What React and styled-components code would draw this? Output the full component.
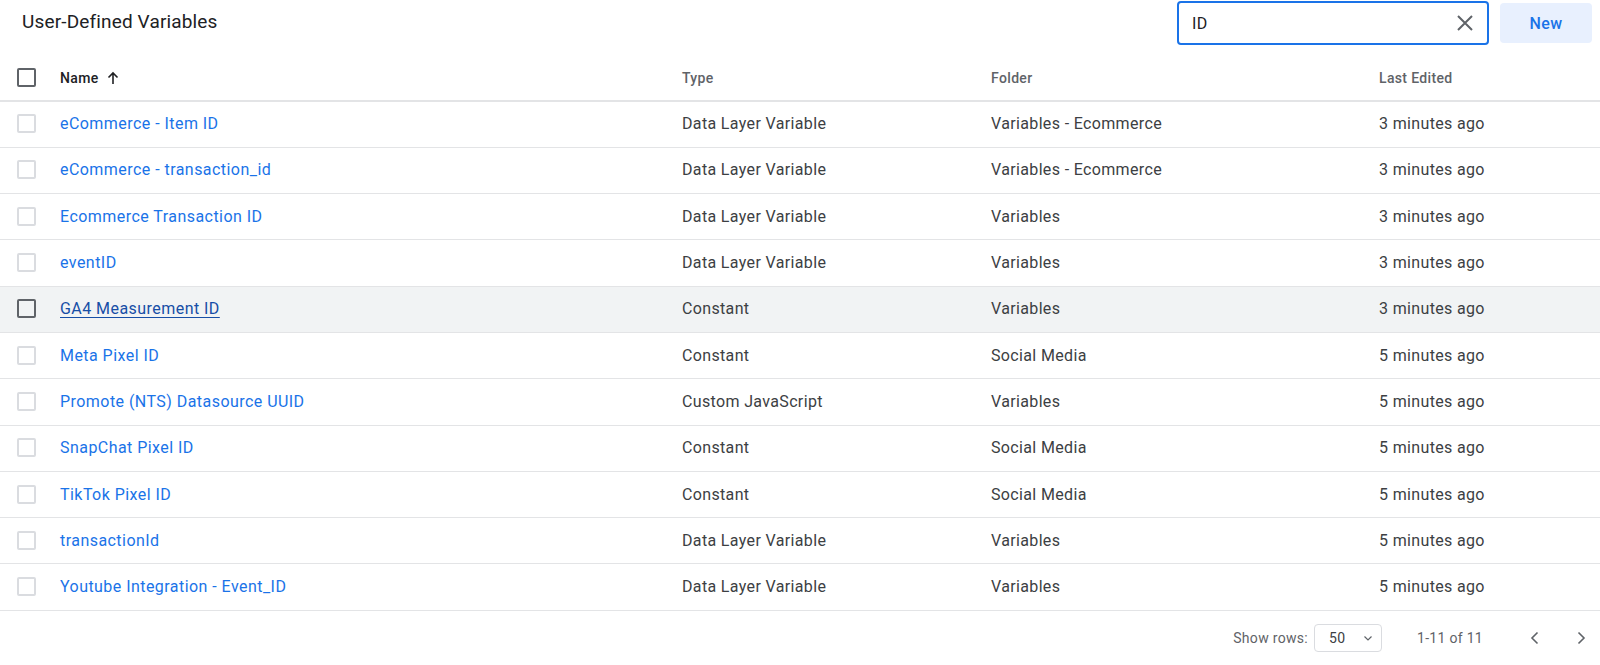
import React from "react";
import styled, { createGlobalStyle } from "styled-components";

const GlobalStyle = createGlobalStyle`
  html, body {
    margin: 0;
    padding: 0;
    background: #ffffff;
    font-family: Roboto, "Liberation Sans", Arial, sans-serif;
    color: #202124;
  }
`;

const Page = styled.div`
  width: 1600px;
  height: 665px;
  display: flex;
  flex-direction: column;
  overflow: hidden;
`;

const TopBar = styled.div`
  height: 56px;
  flex-shrink: 0;
  display: flex;
  align-items: flex-start;
  padding: 1px 8px 0 22px;
  box-sizing: border-box;
`;

const Title = styled.h1`
  margin: 0;
  flex: 1;
  font-size: 19px;
  font-weight: 400;
  letter-spacing: 0.15px;
  line-height: 42px;
  color: #202124;
`;

const SearchBox = styled.div`
  width: 312px;
  height: 44px;
  box-sizing: border-box;
  border: 2px solid #1a73e8;
  border-radius: 4px;
  display: flex;
  align-items: center;
  padding: 0 10px 0 13px;
`;

const SearchInput = styled.div`
  flex: 1;
  font-size: 16px;
  letter-spacing: 0.3px;
  color: #202124;
`;

const ClearButton = styled.span`
  display: flex;
  align-items: center;
  justify-content: center;
  width: 24px;
  height: 24px;
`;

const NewButton = styled.button`
  margin: 2px 0 0 11px;
  width: 92px;
  height: 40px;
  border: none;
  border-radius: 4px;
  background: #e8f0fe;
  color: #1a73e8;
  font-family: Roboto, "Liberation Sans", Arial, sans-serif;
  font-size: 16px;
  letter-spacing: 0.4px;
  font-weight: 500;
`;

const cols = "60px 622px 309px 388px 1fr";

const HeaderRow = styled.div`
  display: grid;
  flex-shrink: 0;
  grid-template-columns: ${cols};
  align-items: center;
  height: 45.5px;
  box-sizing: border-box;
  border-bottom: 2px solid #e3e4e6;
`;

const HeadCell = styled.div`
  font-size: 14px;
  font-weight: 500;
  letter-spacing: 0.35px;
  color: ${(p) => (p.$active ? "#202124" : "#5f6368")};
  display: flex;
  align-items: center;
  gap: 7px;
`;

const Row = styled.div`
  display: grid;
  flex-shrink: 0;
  grid-template-columns: ${cols};
  align-items: center;
  height: 46.3px;
  padding-bottom: 1px;
  box-sizing: border-box;
  border-bottom: 1.5px solid #e3e4e6;
  background: ${(p) => (p.$hover ? "#f1f3f4" : "transparent")};
`;

const CheckCell = styled.div`
  padding-left: 17px;
  display: flex;
  align-items: center;
`;

const Checkbox = styled.span`
  width: 19px;
  height: 19px;
  box-sizing: border-box;
  border: 2px solid ${(p) => (p.$dark ? "#5f6368" : "#dadce0")};
  border-radius: 2px;
  display: block;
`;

const NameLink = styled.a`
  font-size: 16px;
  color: ${(p) => (p.$hover ? "#174ea6" : "#1a73e8")};
  text-decoration: ${(p) => (p.$hover ? "underline" : "none")};
  text-underline-offset: 3px;
  letter-spacing: 0.45px;
`;

const Cell = styled.div`
  font-size: 16px;
  color: #3c4043;
  letter-spacing: 0.35px;
`;

const Footer = styled.div`
  display: flex;
  flex-shrink: 0;
  align-items: center;
  justify-content: flex-end;
  height: 55px;
  padding-right: 7px;
  font-size: 14px;
  letter-spacing: 0.3px;
  color: #5f6368;
`;

const RowsLabel = styled.span`
  margin-right: 6px;
`;

const Select = styled.div`
  width: 68px;
  height: 28px;
  box-sizing: border-box;
  border: 1px solid #dadce0;
  border-radius: 4px;
  display: flex;
  align-items: center;
  justify-content: space-between;
  padding: 0 7px 0 14px;
  font-size: 14px;
  color: #3c4043;
  margin-right: 35px;
`;

const RangeText = styled.span`
  margin-right: 40px;
`;

const PagerButton = styled.span`
  display: flex;
  align-items: center;
  justify-content: center;
  width: 24px;
  height: 24px;
  margin-left: ${(p) => p.$gap || 0}px;
`;

const rows = [
  ["eCommerce - Item ID", "Data Layer Variable", "Variables - Ecommerce", "3 minutes ago"],
  ["eCommerce - transaction_id", "Data Layer Variable", "Variables - Ecommerce", "3 minutes ago"],
  ["Ecommerce Transaction ID", "Data Layer Variable", "Variables", "3 minutes ago"],
  ["eventID", "Data Layer Variable", "Variables", "3 minutes ago"],
  ["GA4 Measurement ID", "Constant", "Variables", "3 minutes ago"],
  ["Meta Pixel ID", "Constant", "Social Media", "5 minutes ago"],
  ["Promote (NTS) Datasource UUID", "Custom JavaScript", "Variables", "5 minutes ago"],
  ["SnapChat Pixel ID", "Constant", "Social Media", "5 minutes ago"],
  ["TikTok Pixel ID", "Constant", "Social Media", "5 minutes ago"],
  ["transactionId", "Data Layer Variable", "Variables", "5 minutes ago"],
  ["Youtube Integration - Event_ID", "Data Layer Variable", "Variables", "5 minutes ago"],
];

const Chevron = ({ dir }) => (
  <svg width="16" height="16" viewBox="0 0 16 16" fill="none" stroke="#5f6368" strokeWidth="1.6">
    {dir === "left" ? <path d="M10.5 2.5 L5 8 L10.5 13.5" /> : <path d="M5.5 2.5 L11 8 L5.5 13.5" />}
  </svg>
);

export default function App() {
  return (
    <Page>
      <GlobalStyle />
      <TopBar>
        <Title>User-Defined Variables</Title>
        <SearchBox>
          <SearchInput>ID</SearchInput>
          <ClearButton>
            <svg width="18" height="18" viewBox="0 0 18 18" stroke="#5f6368" strokeWidth="2">
              <path d="M2 2 L16 16 M16 2 L2 16" />
            </svg>
          </ClearButton>
        </SearchBox>
        <NewButton>New</NewButton>
      </TopBar>

      <HeaderRow>
        <CheckCell>
          <Checkbox $dark />
        </CheckCell>
        <HeadCell $active>
          Name
          <svg width="14" height="14" viewBox="0 0 14 14" fill="none" stroke="#202124" strokeWidth="1.6">
            <path d="M7 13 V2 M2.5 6.5 L7 2 L11.5 6.5" />
          </svg>
        </HeadCell>
        <HeadCell>Type</HeadCell>
        <HeadCell>Folder</HeadCell>
        <HeadCell>Last Edited</HeadCell>
      </HeaderRow>

      {rows.map((r, i) => {
        const hover = i === 4;
        return (
          <Row key={r[0]} $hover={hover}>
            <CheckCell>
              <Checkbox $dark={hover} />
            </CheckCell>
            <div>
              <NameLink $hover={hover}>{r[0]}</NameLink>
            </div>
            <Cell>{r[1]}</Cell>
            <Cell>{r[2]}</Cell>
            <Cell>{r[3]}</Cell>
          </Row>
        );
      })}

      <Footer>
        <RowsLabel>Show rows:</RowsLabel>
        <Select>
          50
          <svg width="12" height="12" viewBox="0 0 12 12" fill="none" stroke="#5f6368" strokeWidth="1.2">
            <path d="M2.5 4.5 L6 8 L9.5 4.5" />
          </svg>
        </Select>
        <RangeText>1-11 of 11</RangeText>
        <PagerButton>
          <Chevron dir="left" />
        </PagerButton>
        <PagerButton $gap={22}>
          <Chevron dir="right" />
        </PagerButton>
      </Footer>
    </Page>
  );
}
